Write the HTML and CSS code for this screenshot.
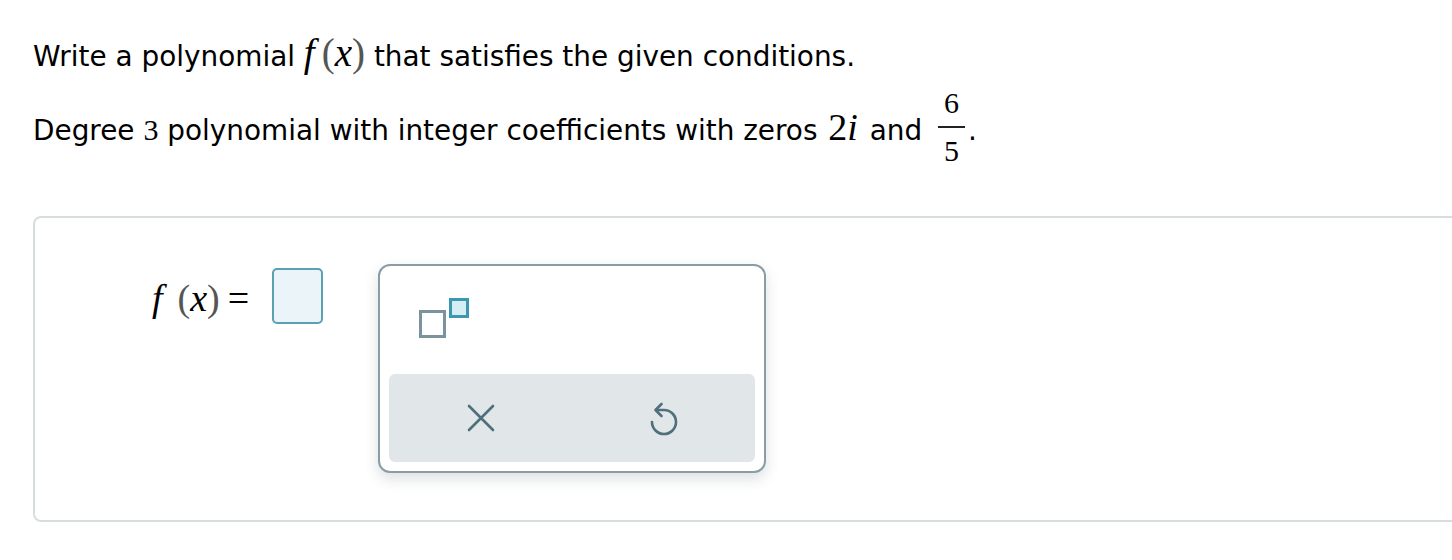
FILE: index.html
```html
<!DOCTYPE html>
<html lang="en">
<head>
<meta charset="utf-8">
<title>Polynomial</title>
<link rel="stylesheet" href="styles.css">
</head>
<body>
<div class="page">
  <p class="line line1">Write a polynomial <span class="m fx"><i class="mi f">f</i><span class="paren">(</span><i class="mi">x</i><span class="paren">)</span></span> that satisfies the given conditions.</p>
  <p class="line line2">Degree <span class="m">3</span> polynomial with integer coefficients with zeros <span class="m big">2<i class="mi">i</i></span> and <span class="frac"><span class="num">6</span><span class="bar"></span><span class="den">5</span></span>.</p>

  <div class="answer">
    <div class="eq">
      <span class="lhs"><i class="mi f">f</i><span class="paren">(</span><i class="mi">x</i><span class="paren">)</span><span class="eqs">=</span></span>
      <span class="input"></span>
    </div>
    <div class="pad">
      <div class="pad-top">
        <button class="key key-exp" aria-label="exponent">
          <svg width="54" height="44" viewBox="0 0 54 44">
            <rect x="3.5" y="15.5" width="24" height="25" fill="#fff" stroke="#7a939d" stroke-width="3"/>
            <rect x="33.5" y="3.5" width="17" height="17" fill="#d5eef4" stroke="#3d97b0" stroke-width="3"/>
          </svg>
        </button>
      </div>
      <div class="pad-bottom">
        <button class="key" aria-label="clear">
          <svg width="28" height="28" viewBox="0 0 28 28">
            <path d="M2 2L26 26M26 2L2 26" stroke="#4f6f7b" stroke-width="2.6" stroke-linecap="round" fill="none"/>
          </svg>
        </button>
        <button class="key" aria-label="undo">
          <svg width="30" height="36" viewBox="0 0 30 36">
            <path d="M3 22A12 12 0 1 0 15 10L7.5 10" stroke="#4f6f7b" stroke-width="2.6" stroke-linecap="round" fill="none"/>
            <path d="M12.5 4L6.5 10L12.5 16" stroke="#4f6f7b" stroke-width="2.6" stroke-linecap="round" stroke-linejoin="round" fill="none"/>
          </svg>
        </button>
      </div>
    </div>
  </div>
</div>
</body>
</html>
```

FILE: styles.css
```css
html, body {
  margin: 0;
  background: #fff;
}
body {
  font-family: "DejaVu Sans", Verdana, sans-serif;
  font-size: 27.9px;
  color: #000;
  overflow: hidden;
}
.page {
  padding: 39px 0 0 33px;
}
.line {
  margin: 0;
  line-height: 36px;
  white-space: nowrap;
}
.line2 {
  margin-top: 13px;
}
.m {
  font-family: "Liberation Serif", "Times New Roman", serif;
  font-size: 30px;
  line-height: 0;
}
.m.big {
  font-size: 38px;
  margin: 0 3px 0 2px;
}
.m.fx {
  font-size: 39px;
}
.mi {
  font-style: italic;
}
.paren {
  color: #555;
}
.fx .f {
  margin-right: 7px;
}
.frac {
  display: inline-flex;
  flex-direction: column;
  align-items: center;
  vertical-align: 27px;
  font-family: "Liberation Serif", "Times New Roman", serif;
  font-size: 30px;
  line-height: 30px;
  margin: 0 3px 0 7px;
}
.frac .num {
  padding-bottom: 8px;
}
.frac .den {
  padding-top: 8px;
}
.frac .bar {
  width: 27px;
  height: 2px;
  background: #222;
}
.answer {
  margin-top: 50px;
  margin-right: -40px;
  height: 306px;
  border: 2px solid #d7dcdf;
  border-radius: 8px;
  display: flex;
  align-items: flex-start;
  padding: 46px 0 0 117px;
  box-sizing: border-box;
}
.eq {
  display: flex;
  align-items: center;
  margin-top: 4px;
}
.lhs {
  font-family: "Liberation Serif", "Times New Roman", serif;
  font-size: 38px;
  line-height: 1;
  display: flex;
  align-items: baseline;
  position: relative;
  top: 2px;
}
.lhs .f {
  margin-right: 15px;
}
.lhs .eqs {
  margin-left: 8px;
}
.input {
  display: block;
  width: 47px;
  height: 52px;
  margin-left: 23px;
  border: 2px solid #5aa1b3;
  border-radius: 5px;
  background: #ebf5f9;
}
.pad {
  margin-left: 55px;
  width: 388px;
  box-sizing: border-box;
  border: 2px solid #8a9ca4;
  border-radius: 12px;
  padding: 9px;
  background: #fff;
  box-shadow: 0 6px 14px rgba(60, 80, 90, 0.18);
}
.pad-top {
  height: 99px;
  box-sizing: border-box;
  padding: 21px 0 0 28px;
}
.key {
  border: 0;
  background: transparent;
  padding: 0;
  display: flex;
  align-items: center;
  justify-content: center;
}
.key-exp {
  width: 54px;
  height: 44px;
}
.pad-bottom {
  height: 88px;
  background: #e1e6e9;
  border-radius: 6px;
  display: grid;
  grid-template-columns: 1fr 1fr;
}
```
